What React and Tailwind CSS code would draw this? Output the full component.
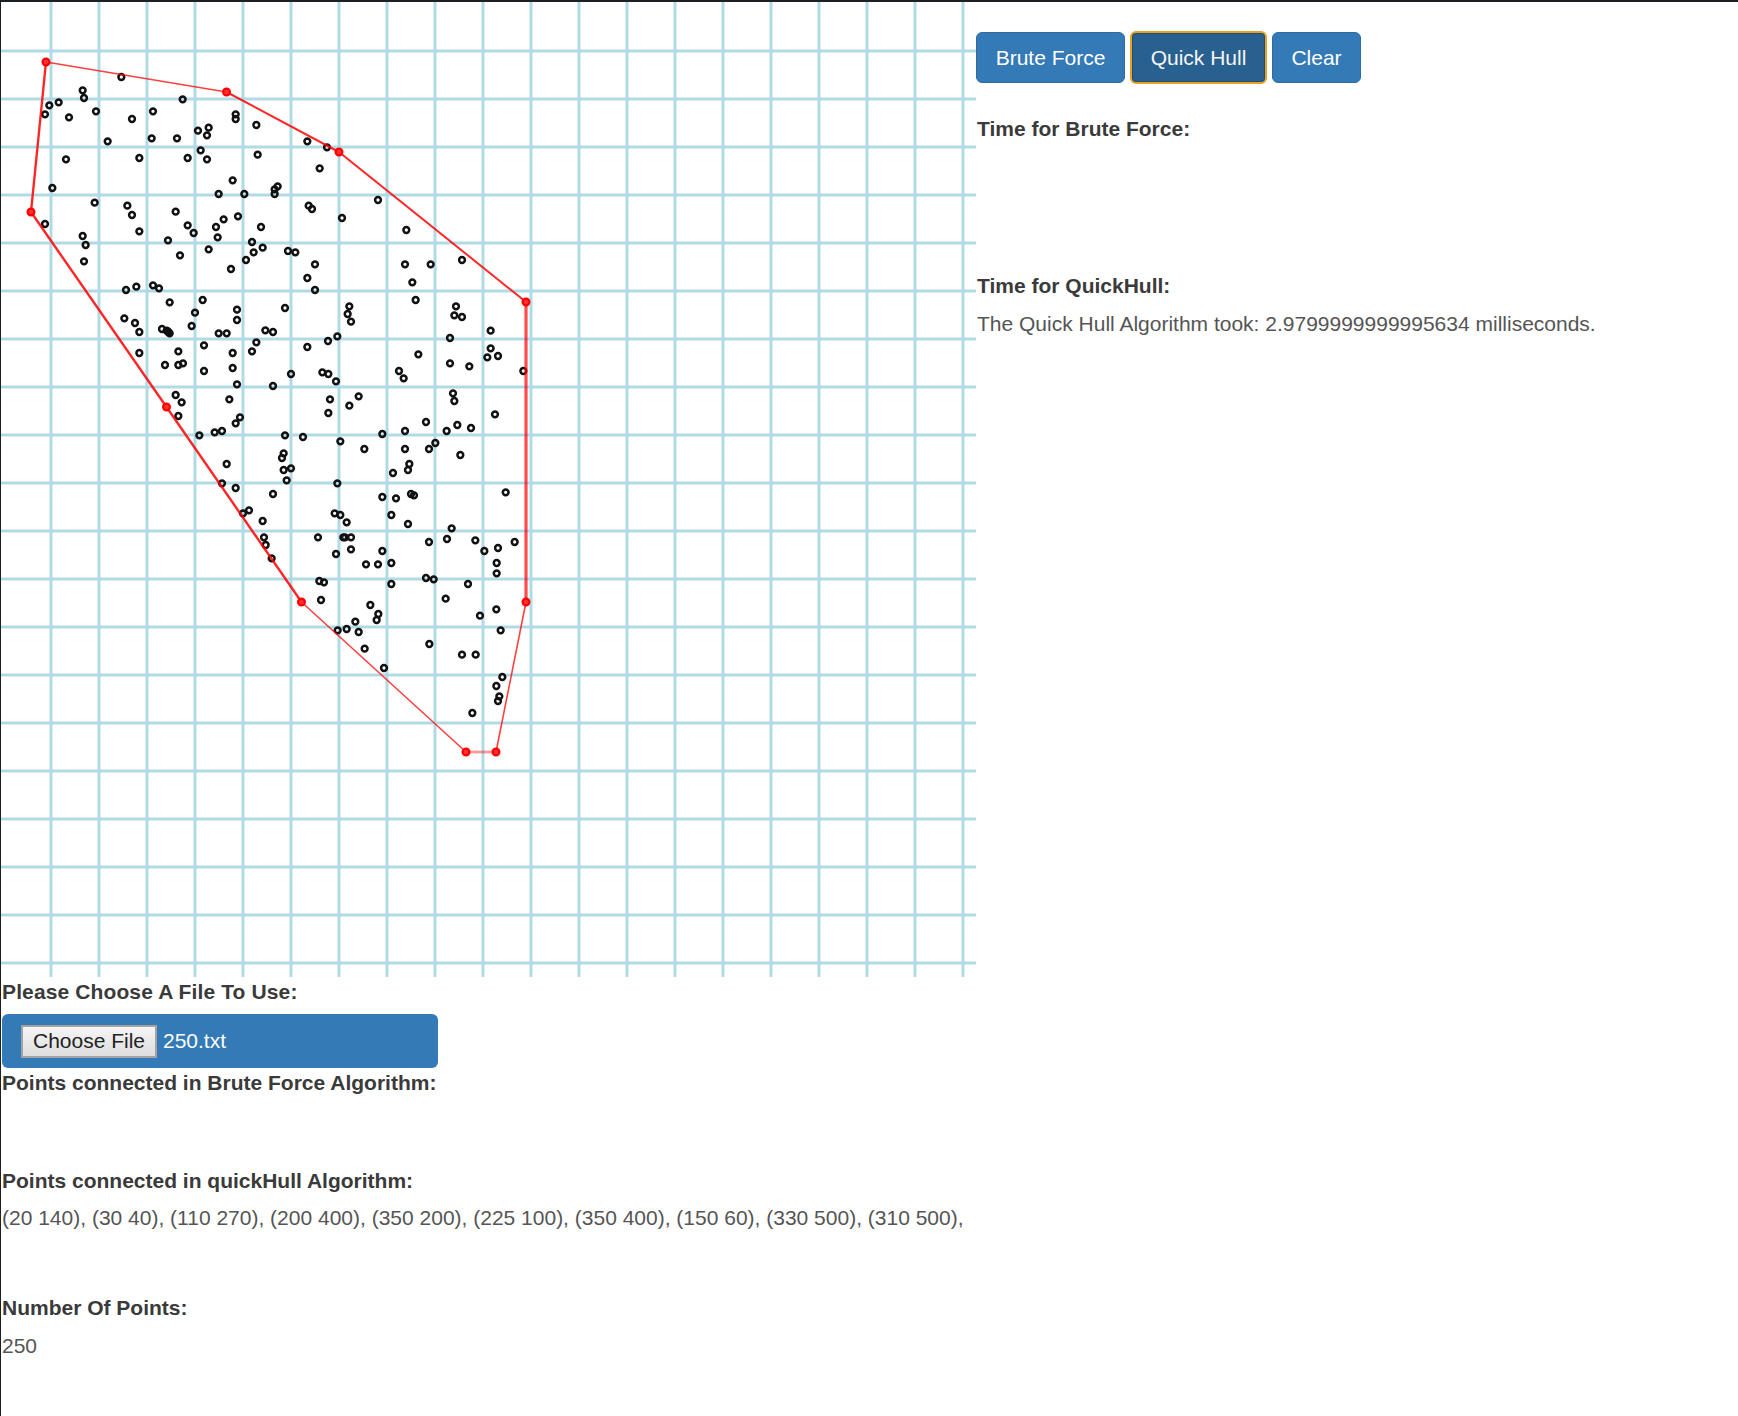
import React from 'react';

// dots read off in 3x crops: [offsetX, offsetY, [zx, zy, ...]]
const dotGroups = [
  [0, 0, [364,231,248,271,252,294,148,316,176,307,135,343,207,352,288,334,396,357,459,334,548,298,707,343,707,357,769,375,626,383,594,392,621,406,323,424,455,415,531,415,922,424,981,442,198,478,418,474,563,474,602,451,621,478,773,464,959,505,157,564,698,541,833,559,824,568,824,582,656,582,733,582,284,608,382,617,396,645,527,635,926,617,936,627,135,672,714,649,671,658,563,676,648,681,783,681,418,694,581,699,248,708,257,735,504,721,653,712,756,726,626,748,761,757,788,743,864,753,886,757,540,766,738,780,252,784,693,807,945,793,922,834,945,870,378,870,409,860,459,856,477,865]],
  [330, 0, [144,600,36,654,229,690,225,793,302,793,396,780,247,847,257,900]],
  [0, 300, [509,7,608,0,711,29,711,60,855,24,585,38,373,55,405,69,418,96,486,87,505,96,509,100,500,92,503,94,575,78,656,100,680,100,796,91,819,96,612,136,769,127,756,154,698,159,535,154,418,159,922,141,984,123,495,195,535,195,549,190,612,213,698,204,873,222,967,217,985,222,711,253,819,258,527,285,545,307,688,298,990,298,985,339,535,348,720,352,707,370,598,406,644,397,666,393,855,406,909,411,851,460,846,474,680,492,851,510,873,505,860,541,666,550,707,564,819,582,747,631,729,640,788,663,792,712,797,735,954,712,815,775,958,843,972,847,963,900]],
  [330, 300, [58,19,378,19,53,42,373,46,396,51,63,65,482,92,22,109,360,114,482,145,472,172,504,168,265,163,360,190,418,199,207,213,221,235,580,213,18,244,369,280,373,303,86,289,58,317,495,343,288,366,225,393,350,393,382,375,423,384,157,402,31,424,316,429,297,447,103,447,225,447,391,465,238,492,234,510,189,519,22,550,527,577,157,591,198,595,243,582,252,586,14,640,31,645,184,645,50,667,234,672,365,685,40,712,45,712,63,712,351,717,436,721,297,726,18,762,63,748,157,753,463,753,504,744,554,726,108,793,144,793,184,789,500,789,500,820,288,834,311,838,184,852,414,852,347,896]],
  [150, 500, [661,315,685,342,680,360,616,365,563,391,590,387,626,396,644,446,702,504,838,432,1039,328,990,347,1052,391,936,464,977,464,1057,531,1039,558,1048,589,1044,603,967,639]],
];

const dots = dotGroups.flatMap(([ox, oy, list]) => {
  const out = [];
  for (let i = 0; i < list.length; i += 2) out.push([ox + list[i] / 3, oy + list[i + 1] / 3]);
  return out;
});

const hull = [
  [31, 212], [46, 62], [226.5, 92], [339, 152], [526, 302],
  [526, 602], [496, 752], [466, 752], [301.5, 602], [166.5, 407],
];
const hullWidths = [2.4, 1.6, 2, 2, 3.2, 1.6, 2.8, 1.6, 2.4, 2.4];
const hullOpacity = [0.85, 0.75, 0.85, 0.85, 0.7, 0.75, 0.4, 0.75, 0.85, 0.85];

const gridStops = Array.from({ length: 20 }, (_, i) => 50 + i * 48);

const HullCanvas = () => (
  <svg className="shrink-0" width="975" height="975" viewBox="1 2 975 975">
    {gridStops.map((p) => (
      <g key={p} stroke="#add8e6" strokeWidth="3" strokeOpacity="0.95">
        <line x1={p + 1} y1="2" x2={p + 1} y2="977" />
        <line x1="1" y1={p + 1} x2="976" y2={p + 1} />
      </g>
    ))}
    {dots.map(([x, y], i) => (
      <circle key={i} cx={x} cy={y} r="2.9" fill="none" stroke="#111" strokeWidth="2.5" />
    ))}
    {hull.map(([x, y], i) => {
      const [nx, ny] = hull[(i + 1) % hull.length];
      return (
        <line key={i} x1={x} y1={y} x2={nx} y2={ny} stroke="#ff0000" strokeWidth={hullWidths[i]} strokeOpacity={hullOpacity[i]} />
      );
    })}
    {hull.map(([x, y]) => (
      <circle key={x + y} cx={x} cy={y} r="3.4" fill="#ff3030" stroke="#ff0000" strokeWidth="2.2" />
    ))}
  </svg>
);

const ActionButton = ({ label, active, width }) => (
  <button
    className={`${width} ${
      active
        ? 'h-[53px] rounded-[6px] border-2 border-[#e8a325] bg-[#286090] text-[21px] text-[#f5f5f5] shadow-[inset_0_0_0_1px_#204d74]'
        : 'h-[51px] rounded-[6px] border border-[#2e6da4] bg-[#337ab7] text-[21px] text-white'
    }`}
  >
    {label}
  </button>
);

const Label = ({ children, className = '' }) => (
  <p className={`text-[21px] leading-[24px] font-bold text-[#3a3a3a] ${className}`}>{children}</p>
);

const Value = ({ children, className = '' }) => (
  <p className={`text-[21px] leading-[24px] text-[#555] ${className}`}>{children}</p>
);

export default function App() {
  return (
    <div className="min-h-[1416px] border-t-2 border-l border-[#1c2024] bg-white font-['Liberation_Sans',Arial,sans-serif]">
      <div className="flex">
        <HullCanvas />
        <div className="pt-[29px]">
          <div className="flex items-center gap-[5px]">
            <ActionButton label="Brute Force" width="w-[149px]" />
            <ActionButton label="Quick Hull" width="w-[137px]" active />
            <ActionButton label="Clear" width="w-[89px]" />
          </div>
          <Label className="mt-[33px] ml-px">Time for Brute Force:</Label>
          <Label className="mt-[133px] ml-px">Time for QuickHull:</Label>
          <Value className="mt-[14px] ml-px">The Quick Hull Algorithm took: 2.9799999999995634 milliseconds.</Value>
        </div>
      </div>
      <div className="px-px">
        <Label className="mt-[3px] tracking-[0.12px]">Please Choose A File To Use:</Label>
        <div className="mt-[10px] flex h-[54px] w-[436px] items-center gap-[6px] rounded-[6px] bg-[#337ab7] pl-[19px]">
          <span className="flex h-[33px] w-[136px] items-center justify-center border-2 border-[#a3a3a3] bg-linear-to-b from-[#f5f5f5] to-[#dedede] text-[21px] text-[#222]">Choose File</span>
          <span className="text-[21px] text-white">250.txt</span>
        </div>
        <Label className="mt-[3px]">Points connected in Brute Force Algorithm:</Label>
        <Label className="mt-[74px]">Points connected in quickHull Algorithm:</Label>
        <Value className="mt-[13px]">(20 140), (30 40), (110 270), (200 400), (350 200), (225 100), (350 400), (150 60), (330 500), (310 500),</Value>
        <Label className="mt-[66px]">Number Of Points:</Label>
        <Value className="mt-[14px]">250</Value>
      </div>
    </div>
  );
}
